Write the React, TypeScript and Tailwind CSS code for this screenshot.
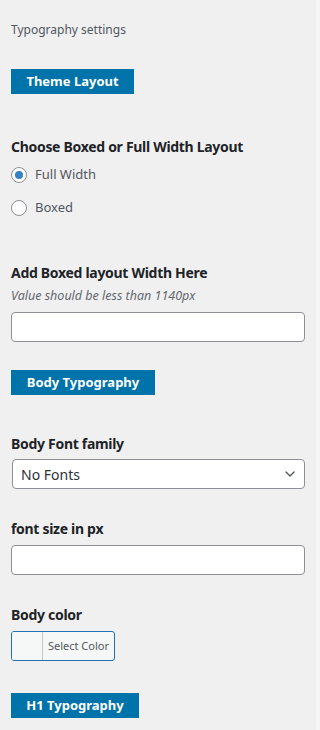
import { ChevronDown } from "lucide-react"

const font = { fontFamily: '"Noto Sans", "Open Sans", sans-serif' }

function SectionButton({ label, width }: { label: string; width: string }) {
  return (
    <div className={`h-[25px] ${width} bg-[#0073aa] text-white text-[13px] font-bold flex items-center justify-center leading-none`}>
      {label}
    </div>
  )
}

function Label({ children }: { children: React.ReactNode }) {
  return <div className="text-[14px] font-bold text-[#1d2327] leading-[20px] tracking-[-0.3px]">{children}</div>
}

function Radio({ label, checked }: { label: string; checked?: boolean }) {
  return (
    <label className="flex items-center gap-[8px] h-[20px]">
      <span className="w-[16px] h-[16px] rounded-full border border-[#8c8f94] bg-white flex items-center justify-center">
        {checked && <span className="w-[8px] h-[8px] rounded-full bg-[#3582c4]" />}
      </span>
      <span className="text-[13px] text-[#50575e]">{label}</span>
    </label>
  )
}

export default function App() {
  return (
    <div className="w-[320px] h-[730px] flex bg-[#f0f0f1] overflow-hidden" style={font}>
      <div className="w-[316px] px-[11px] pt-[20px]">
        <div className="text-[12px] text-[#50575e] leading-[20px]">Typography settings</div>

        <div className="mt-[29px]">
          <SectionButton label="Theme Layout" width="w-[123px]" />
        </div>

        <div className="mt-[43px]">
          <Label>Choose Boxed or Full Width Layout</Label>
          <div className="mt-[8px] flex flex-col gap-[13px]">
            <Radio label="Full Width" checked />
            <Radio label="Boxed" />
          </div>
        </div>

        <div className="mt-[45px]">
          <Label>Add Boxed layout Width Here</Label>
          <div className="mt-[5px] text-[12.5px] italic text-[#646970] leading-[16px]">Value should be less than 1140px</div>
          <div className="mt-[8px] h-[30px] w-[294px] bg-white border border-[#8c8f94] rounded-[4px]" />
        </div>

        <div className="mt-[28px]">
          <SectionButton label="Body Typography" width="w-[144px]" />
        </div>

        <div className="mt-[39px]">
          <Label>Body Font family</Label>
          <div className="mt-[5px] ml-[1px] h-[30px] w-[293px] bg-white border border-[#8c8f94] rounded-[4px] flex items-center justify-between pl-[8px] pr-[6px]">
            <span className="text-[14px] text-[#2c3338]">No Fonts</span>
            <ChevronDown className="w-[16px] h-[16px] text-[#50575e]" strokeWidth={2} />
          </div>
        </div>

        <div className="mt-[30px]">
          <Label>font size in px</Label>
          <div className="mt-[6px] h-[30px] w-[294px] bg-white border border-[#8c8f94] rounded-[4px]" />
        </div>

        <div className="mt-[30px]">
          <Label>Body color</Label>
          <div className="mt-[6px] h-[30px] w-[104px] border border-[#2271b1] rounded-[3px] bg-[#f6f7f7] flex overflow-hidden">
            <div className="w-[31px] h-full bg-[#f6f7f7] border-r border-[#c3c4c7]" />
            <div className="flex-1 flex items-center justify-center text-[11px] text-[#50575e]">Select Color</div>
          </div>
        </div>

        <div className="mt-[32px]">
          <SectionButton label="H1 Typography" width="w-[128px]" />
        </div>
      </div>
      <div className="w-[4px] h-full bg-[#f6f6f6]" />
    </div>
  )
}
